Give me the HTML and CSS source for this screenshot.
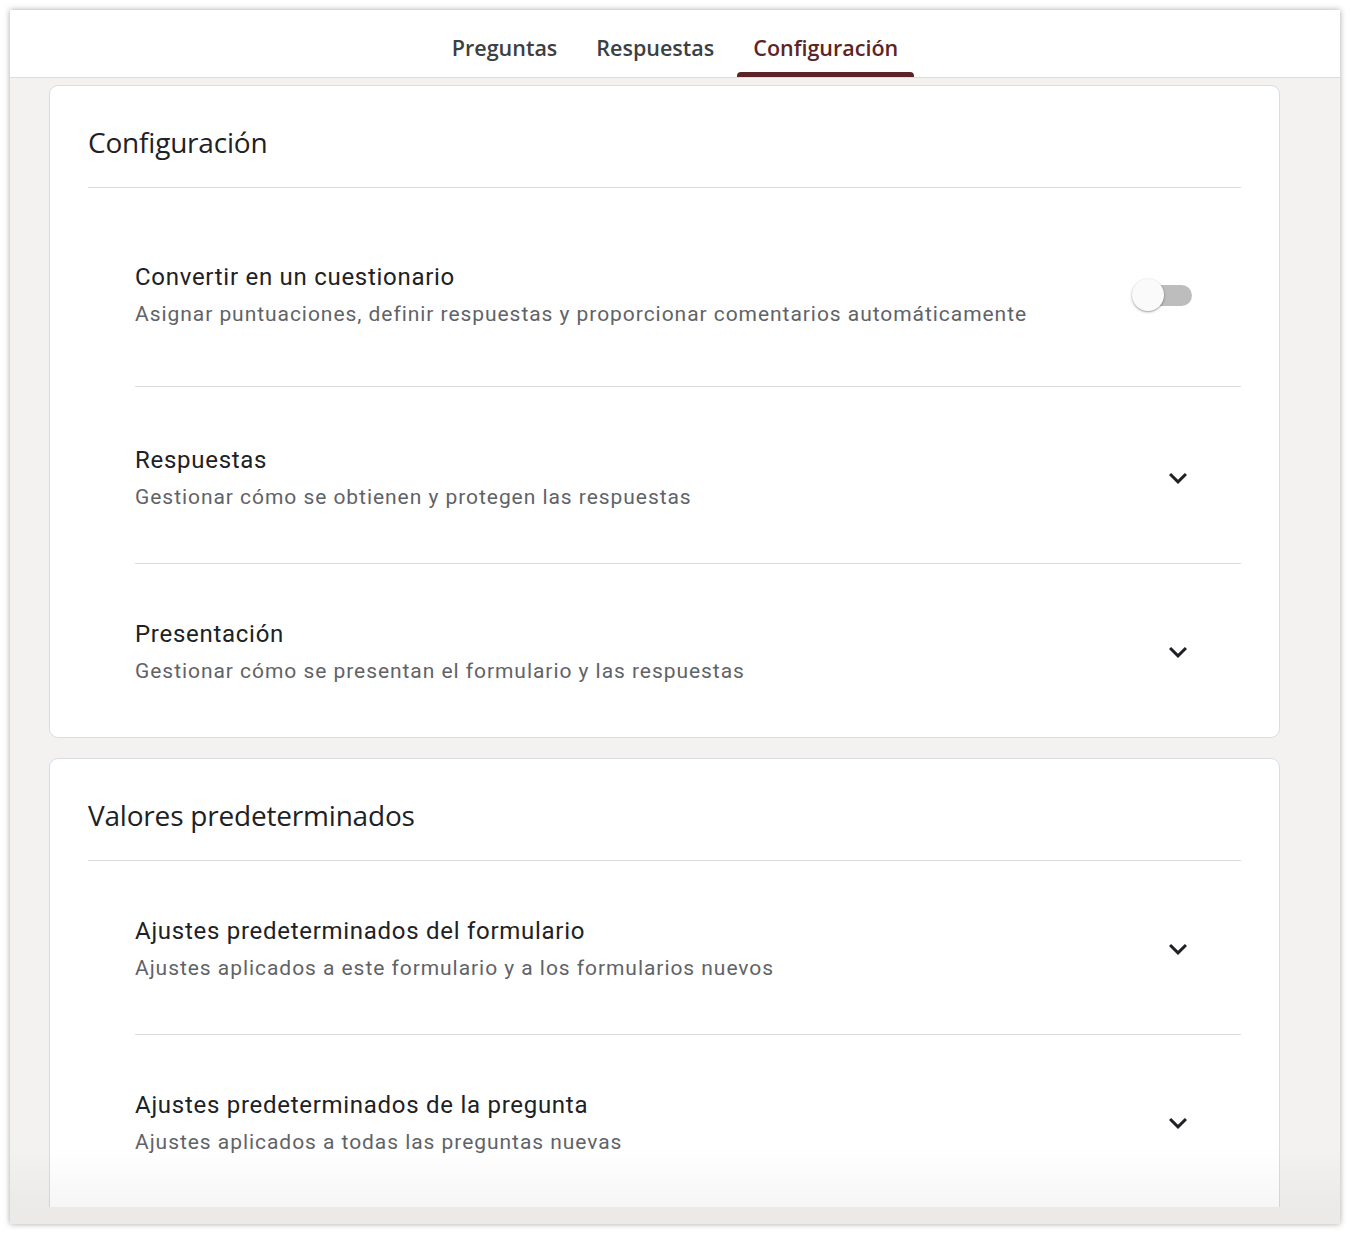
FILE: index.html
```html
<!DOCTYPE html>
<html lang="es">
<head>
<meta charset="utf-8">
<title>Configuración</title>
<link rel="stylesheet" href="styles.css">
</head>
<body>
<div class="window">
  <header class="topbar">
    <nav class="tabs">
      <div class="tab">Preguntas</div>
      <div class="tab">Respuestas</div>
      <div class="tab active">Configuración</div>
    </nav>
  </header>
  <main class="content">
    <section class="card">
      <h2 class="card-title">Configuración</h2>
      <div class="row row-first">
        <div class="row-text">
          <div class="row-title">Convertir en un cuestionario</div>
          <div class="row-sub">Asignar puntuaciones, definir respuestas y proporcionar comentarios automáticamente</div>
        </div>
        <div class="toggle"><span class="track"></span><span class="thumb"></span></div>
      </div>
      <div class="row row-tall">
        <div class="row-text">
          <div class="row-title">Respuestas</div>
          <div class="row-sub">Gestionar cómo se obtienen y protegen las respuestas</div>
        </div>
        <svg class="chev" viewBox="0 0 24 24"><path d="M16.59 8.59L12 13.17 7.41 8.59 6 10l6 6 6-6z"/></svg>
      </div>
      <div class="row">
        <div class="row-text">
          <div class="row-title">Presentación</div>
          <div class="row-sub">Gestionar cómo se presentan el formulario y las respuestas</div>
        </div>
        <svg class="chev" viewBox="0 0 24 24"><path d="M16.59 8.59L12 13.17 7.41 8.59 6 10l6 6 6-6z"/></svg>
      </div>
    </section>
    <section class="card card-cut">
      <h2 class="card-title">Valores predeterminados</h2>
      <div class="row">
        <div class="row-text">
          <div class="row-title">Ajustes predeterminados del formulario</div>
          <div class="row-sub">Ajustes aplicados a este formulario y a los formularios nuevos</div>
        </div>
        <svg class="chev" viewBox="0 0 24 24"><path d="M16.59 8.59L12 13.17 7.41 8.59 6 10l6 6 6-6z"/></svg>
      </div>
      <div class="row">
        <div class="row-text">
          <div class="row-title">Ajustes predeterminados de la pregunta</div>
          <div class="row-sub">Ajustes aplicados a todas las preguntas nuevas</div>
        </div>
        <svg class="chev" viewBox="0 0 24 24"><path d="M16.59 8.59L12 13.17 7.41 8.59 6 10l6 6 6-6z"/></svg>
      </div>
    </section>
    <div class="fade"></div>
  </main>
  <div class="bottom-strip"></div>
</div>
</body>
</html>
```
FILE: styles.css
```css
* { box-sizing: border-box; }
html, body { margin: 0; padding: 0; background: #ffffff; }
body { font-family: Roboto, "Liberation Sans", Arial, sans-serif; }

.window {
  margin: 10px;
  width: 1330px;
  height: 1214px;
  background: #f3f2f0;
  box-shadow: 0 0 6px rgba(0, 0, 0, 0.35);
  display: flex;
  flex-direction: column;
  overflow: hidden;
}

.topbar {
  height: 68px;
  flex: none;
  background: #ffffff;
  border-bottom: 1px solid #dadce0;
  display: flex;
  justify-content: center;
}
.tabs { display: flex; gap: 7px; height: 100%; }
.tab {
  position: relative;
  padding: 7px 16px 0;
  display: flex;
  align-items: center;
  font-family: "Open Sans", Roboto, sans-serif;
  font-size: 21.5px;
  font-weight: 600;
  color: #3c4043;
}
.tab.active { color: #5b2527; }
.tab.active::after {
  content: "";
  position: absolute;
  left: 0; right: 0; bottom: 0;
  height: 5px;
  background: #5b2527;
  border-radius: 4px 4px 0 0;
}

.content {
  flex: 1;
  position: relative;
  overflow: hidden;
  padding: 7px 0 0 39px;
  display: flex;
  flex-direction: column;
  gap: 20px;
}

.card {
  flex: none;
  width: 1231px;
  background: #ffffff;
  border: 1px solid #dadce0;
  border-radius: 9px;
  padding: 0 38px;
}
.card-cut { padding-bottom: 40px; }
.card-title {
  margin: 0;
  padding: 38px 0 27px;
  font-family: "Open Sans", Roboto, sans-serif;
  font-weight: 400;
  font-size: 28px;
  line-height: 36px;
  color: #202124;
  letter-spacing: -0.2px;
  border-bottom: 1px solid #dadce0;
}

.row {
  margin-left: 47px;
  padding: 54px 0 52px;
  display: flex;
  align-items: center;
  justify-content: space-between;
  border-bottom: 1px solid #dadce0;
}
.row:last-child { border-bottom: none; }
.row-first { padding: 73px 0 58px; }
.row-tall { padding: 57px 0 52px; }
.row-title {
  font-size: 24px;
  line-height: 32px;
  color: #202124;
  letter-spacing: 0.72px;
}
.row-sub {
  margin-top: 7px;
  font-size: 21px;
  line-height: 28px;
  color: #5f6368;
  letter-spacing: 0.95px;
}

.chev {
  width: 36px;
  height: 36px;
  margin-right: 45px;
  fill: #202124;
  flex: none;
}

.toggle {
  position: relative;
  width: 60px;
  height: 32px;
  margin-right: 49px;
  flex: none;
}
.track {
  position: absolute;
  right: 0; top: 6px;
  width: 51px;
  height: 21px;
  border-radius: 11px;
  background: #bdbdbd;
}
.thumb {
  position: absolute;
  left: 0; top: 0;
  width: 32px;
  height: 32px;
  border-radius: 50%;
  background: #fafafa;
  box-shadow: 0 1px 3px rgba(0, 0, 0, 0.3), 0 1px 1px rgba(0, 0, 0, 0.12);
}

.fade {
  position: absolute;
  left: 0; right: 0; bottom: 0;
  height: 60px;
  background: linear-gradient(to bottom, rgba(0, 0, 0, 0), rgba(0, 0, 0, 0.035));
  pointer-events: none;
}
.bottom-strip {
  height: 17px;
  flex: none;
  background: #ebeae8;
}
```
